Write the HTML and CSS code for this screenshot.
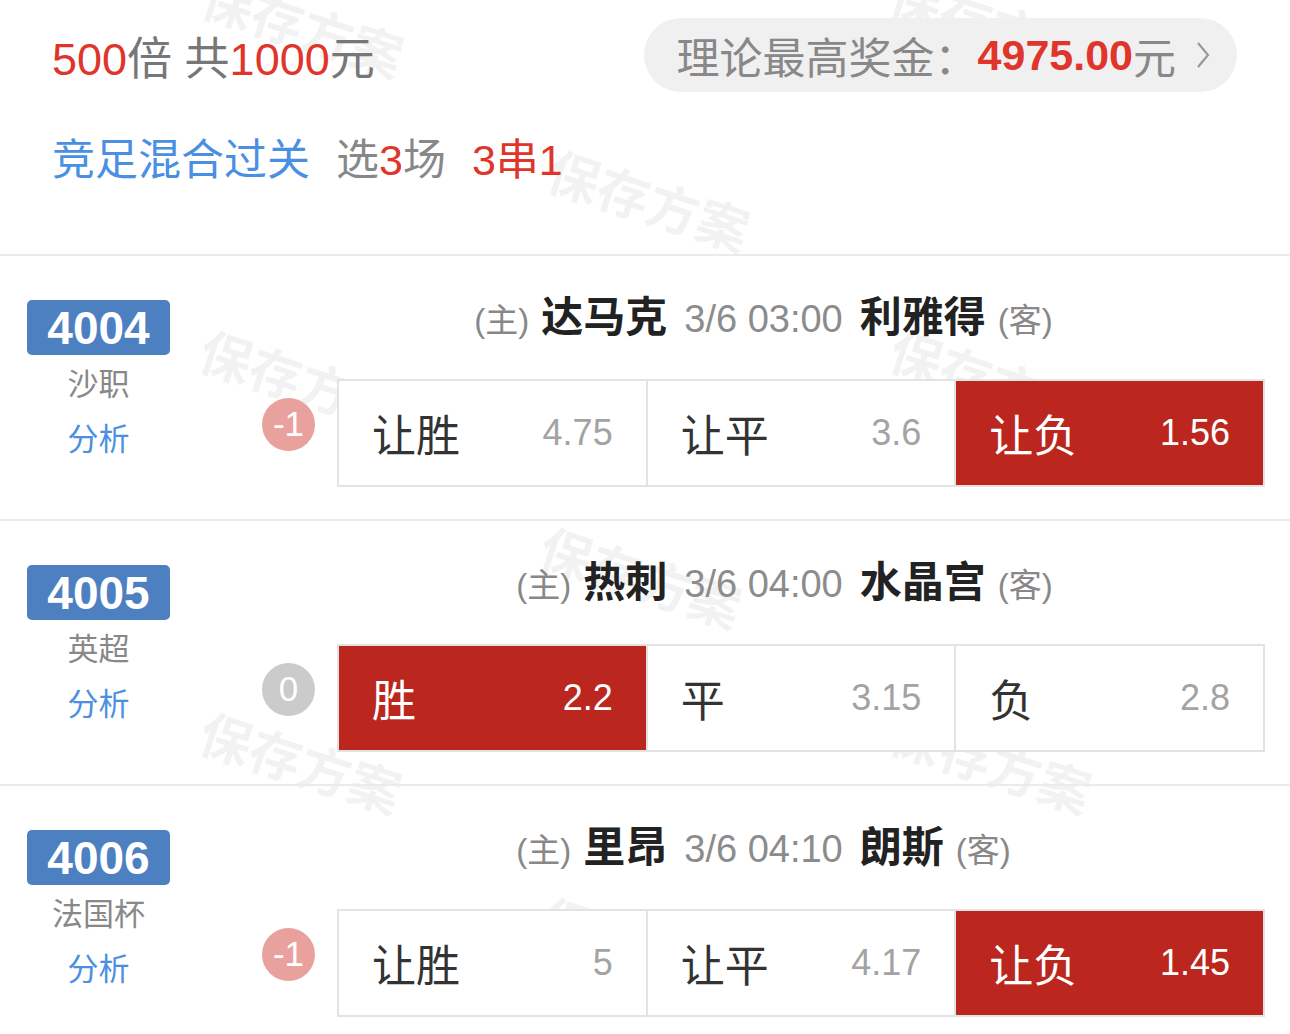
FILE: index.html
```html
<!DOCTYPE html>
<html lang="zh-CN">
  <head>
    <meta charset="UTF-8" />
    <meta name="viewport" content="width=device-width, initial-scale=1.0" />
    <title>方案详情</title>
    <link rel="stylesheet" href="styles.css">
  </head>
  <body>
    <div class="page">
      <!-- watermark layer -->
      <div class="watermark wm-1">保存方案</div>
      <div class="watermark wm-2">保存方案</div>
      <div class="watermark wm-3">保存方案</div>
      <div class="watermark wm-4">保存方案</div>
      <div class="watermark wm-5">保存方案</div>
      <div class="watermark wm-6">保存方案</div>
      <div class="watermark wm-7">保存方案</div>
      <div class="watermark wm-8">保存方案</div>
      <div class="watermark wm-9">保存方案</div>

      <section class="summary">
        <div class="summary-top">
          <div class="total"><span class="red">500</span>倍 共<span class="red">1000</span>元</div>
          <div class="prize">
            理论最高奖金：<b>4975.00</b>元
            <svg class="chevron" viewBox="0 0 14 28"><polyline points="2,2 12,14 2,26" /></svg>
          </div>
        </div>
        <div class="summary-play">
          <span class="play-type">竞足混合过关</span>
          <span>选<span class="red">3</span>场</span>
          <span class="red">3串1</span>
        </div>
      </section>

      <section class="match">
        <div class="match-side">
          <div class="match-no">4004</div>
          <div class="league">沙职</div>
          <div class="analysis">分析</div>
        </div>
        <div class="match-main">
          <div class="match-title">
            <div class="team home"><span class="tag">(主)</span><span class="name">达马克</span></div>
            <div class="time">3/6 03:00</div>
            <div class="team away"><span class="name">利雅得</span><span class="tag">(客)</span></div>
          </div>
          <div class="odds-row">
            <div class="handicap">-1</div>
            <div class="odds">
              <div class="odd"><span class="odd-name">让胜</span><span class="odd-value">4.75</span></div>
              <div class="odd"><span class="odd-name">让平</span><span class="odd-value">3.6</span></div>
              <div class="odd picked"><span class="odd-name">让负</span><span class="odd-value">1.56</span></div>
            </div>
          </div>
        </div>
      </section>

      <section class="match">
        <div class="match-side">
          <div class="match-no">4005</div>
          <div class="league">英超</div>
          <div class="analysis">分析</div>
        </div>
        <div class="match-main">
          <div class="match-title">
            <div class="team home"><span class="tag">(主)</span><span class="name">热刺</span></div>
            <div class="time">3/6 04:00</div>
            <div class="team away"><span class="name">水晶宫</span><span class="tag">(客)</span></div>
          </div>
          <div class="odds-row">
            <div class="handicap even">0</div>
            <div class="odds">
              <div class="odd picked"><span class="odd-name">胜</span><span class="odd-value">2.2</span></div>
              <div class="odd"><span class="odd-name">平</span><span class="odd-value">3.15</span></div>
              <div class="odd"><span class="odd-name">负</span><span class="odd-value">2.8</span></div>
            </div>
          </div>
        </div>
      </section>

      <section class="match">
        <div class="match-side">
          <div class="match-no">4006</div>
          <div class="league">法国杯</div>
          <div class="analysis">分析</div>
        </div>
        <div class="match-main">
          <div class="match-title">
            <div class="team home"><span class="tag">(主)</span><span class="name">里昂</span></div>
            <div class="time">3/6 04:10</div>
            <div class="team away"><span class="name">朗斯</span><span class="tag">(客)</span></div>
          </div>
          <div class="odds-row">
            <div class="handicap">-1</div>
            <div class="odds">
              <div class="odd"><span class="odd-name">让胜</span><span class="odd-value">5</span></div>
              <div class="odd"><span class="odd-name">让平</span><span class="odd-value">4.17</span></div>
              <div class="odd picked"><span class="odd-name">让负</span><span class="odd-value">1.45</span></div>
            </div>
          </div>
        </div>
      </section>
    </div>
  </body>
</html>
```

FILE: styles.css
```css
* {
  margin: 0;
  padding: 0;
  box-sizing: border-box;
}
body {
  font-family: "Liberation Sans", "Noto Sans CJK SC", sans-serif;
  background: #fff;
  color: #333;
  overflow: hidden;
}
.page {
  position: relative;
  width: 1290px;
}
.red {
  color: #e0352b;
}

/* watermarks */
.watermark {
  position: absolute;
  z-index: 0;
  font-size: 52px;
  font-weight: bold;
  line-height: 74px;
  color: rgba(0, 0, 0, 0.05);
  white-space: nowrap;
  transform: rotate(18deg);
}
.wm-1 { left: 198px; top: -8px; }
.wm-2 { left: 544px; top: 166px; }
.wm-3 { left: 886px; top: -10px; }
.wm-4 { left: 196px; top: 346px; }
.wm-5 { left: 886px; top: 346px; }
.wm-6 { left: 536px; top: 543px; }
.wm-7 { left: 196px; top: 728px; }
.wm-8 { left: 886px; top: 728px; }
.wm-9 { left: 536px; top: 913px; }

/* summary */
.summary,
.match {
  position: relative;
  z-index: 1;
}
.summary {
  height: 254px;
  padding: 18px 53px 0 52px;
}
.summary-top {
  display: flex;
  justify-content: space-between;
  align-items: center;
  height: 74px;
}
.total {
  font-size: 45px;
  color: #777;
}
.prize {
  display: flex;
  align-items: center;
  height: 74px;
  padding: 0 27px 0 33px;
  background: #f0f0f0;
  border-radius: 37px;
  font-size: 43px;
  color: #888;
}
.prize b {
  color: #e0352b;
}
.chevron {
  width: 14px;
  height: 28px;
  margin-left: 20px;
  fill: none;
  stroke: #999;
  stroke-width: 2.2;
}
.summary-play {
  display: flex;
  gap: 26px;
  margin-top: 38px;
  font-size: 43px;
  line-height: 60px;
  color: #888;
}
.play-type {
  color: #4a90e2;
}

/* match rows */
.match {
  display: flex;
  border-top: 2px solid #ebebeb;
  padding: 40px 25px 32px 27px;
}
.match-side {
  width: 143px;
  padding-top: 4px;
  text-align: center;
}
.match-no {
  height: 55px;
  line-height: 56px;
  background: #4d80c0;
  color: #fff;
  font-size: 46px;
  font-weight: bold;
  border-radius: 5px;
}
.league {
  margin-top: 6px;
  line-height: 48px;
  font-size: 31px;
  color: #888;
}
.analysis {
  margin-top: 7px;
  line-height: 48px;
  font-size: 31px;
  color: #4a90e2;
}
.match-main {
  flex: 1;
  margin-left: 67px;
}
.match-title {
  display: grid;
  grid-template-columns: 1fr auto 1fr;
  align-items: baseline;
  column-gap: 17px;
  height: 44px;
  line-height: 44px;
  margin-right: -25px;
}
.team {
  display: flex;
  align-items: baseline;
  gap: 12px;
}
.home {
  justify-self: end;
}
.away {
  justify-self: start;
}
.tag {
  font-size: 33px;
  color: #888;
}
.name {
  font-size: 42px;
  font-weight: bold;
  color: #222;
}
.time {
  font-size: 38px;
  color: #8c8c8c;
}
.odds-row {
  display: flex;
  align-items: center;
  height: 108px;
  margin-top: 39px;
}
.handicap {
  width: 53px;
  height: 53px;
  margin: -18px 22px 0 25px;
  border-radius: 50%;
  background: #e9a19d;
  color: #fff;
  font-size: 35px;
  display: flex;
  align-items: center;
  justify-content: center;
}
.handicap.even {
  background: #cbcbcb;
}
.odds {
  flex: 1;
  display: flex;
  height: 108px;
  border: 2px solid #e3e3e3;
  background: #fff;
}
.odd {
  flex: 1;
  display: flex;
  justify-content: space-between;
  align-items: center;
  padding: 0 33px;
  border-left: 2px solid #e3e3e3;
}
.odd:first-child {
  border-left: none;
}
.odd-name {
  font-size: 44px;
  color: #333;
}
.odd-value {
  font-size: 36px;
  color: #a3a3a3;
}
.odd.picked {
  background: #bb271e;
}
.odd.picked span {
  color: #fff;
}
```
